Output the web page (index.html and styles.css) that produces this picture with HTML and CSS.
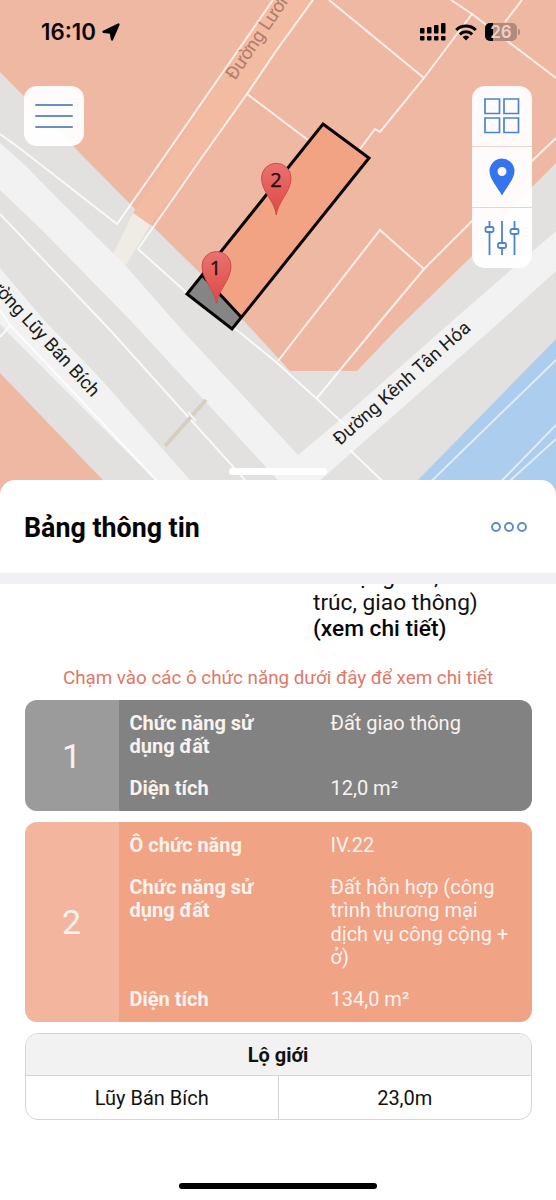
FILE: index.html
```html
<!DOCTYPE html>
<html lang="vi">
<head>
<meta charset="utf-8">
<title>Bảng thông tin</title>
<link rel="stylesheet" href="styles.css">
</head>
<body>
<div class="screen">
  <section class="map">
    <svg class="map-canvas" viewBox="0 0 556 500" width="556" height="500">
      <defs>
        <linearGradient id="pin" x1="0" y1="0" x2="0" y2="1"><stop offset="0" stop-color="#e97370"/><stop offset="1" stop-color="#df4742"/></linearGradient>
      </defs>
      <rect width="556" height="500" fill="#e2e1e0"/>
      <path class="zone" d="M0 0H556V163L532 187 471 257 396 330 357 371H290L200 273 133 207 0 72Z"/>
      <path class="zone" d="M0 373 122 500H0Z"/>
      <path fill="#f3bba2" d="M273 0H313L247 94 150 225 133 213Z"/>
      <path fill="#efebe5" d="M133 213 150 225 125 267 113 254Z"/>
      <path class="road" d="M0 143 25 165 60 201 113 253 125 265 182 330 298 455 340 420 442 330 520 262 556 231V271L502 320 350 454 298 500 296 500 265 466 130 320 42 230 0 190Z"/>
      <path class="road" d="M0 268 44 320 100 378 190 480 208 500H175L10 335 0 324Z"/>
      <path fill="#accded" d="M556 339 418 480 398 500H556Z"/>
      <g class="parcels">
        <path d="M273 0 162 160 117 224 22 150 0 134"/>
        <path d="M313 0 276 51 247 94 200 160 138 249 187 293 238 331 276 362 317 399 345 425M350 450 402 500"/>
        <path d="M247 94 308 140M329 0 424 78M451 0 472 14 556 78M522 0 505 22M472 14 424 78 380 132 375 129 360 149"/>
        <path d="M278 361 302 330 380 230 424 269M556 138 533 160 471 222 424 269 373 330 317 398"/>
        <path d="M0 214 110 330 262 499M0 310 10 325 175 500M0 337 10 326"/>
        <path class="water-line" d="M556 360 412 500M556 425 483 500M556 439 489 500"/>
      </g>
      <path d="M206 400 165 446" stroke="#d6cfc0" stroke-width="4"/>
      <path d="M188 412 196 421" stroke="#f5f4f2" stroke-width="2"/>
      <path d="M323 124 369 158 241 317 202 275Z" fill="#f1a384"/>
      <path d="M202 275 241 317 232 329 187 294Z" fill="#858585"/>
      <path d="M323 124 369 158 232 329 187 294ZM202 275 241 317" fill="none" stroke="#080404" stroke-width="3"/>
      <g fill="url(#pin)" stroke="#c84f4d">
        <path d="M276.250 215C275 201 261.500 192 261.500 178A14.750 14.750 0 0 1 291 178C291 192 278 201 276.250 215Z"/>
        <path d="M216.500 304C215 290 202 280 202 266A14.500 14.500 0 0 1 231 266C231 280 218 290 216.500 304Z"/>
      </g>
      <g class="pin-label">
        <text x="276" y="187">2</text>
        <text x="215.500" y="275">1</text>
      </g>
      <text class="street faded" transform="translate(235 81) rotate(-56)">Đường Lương Minh</text>
      <text class="street" transform="translate(340 446) rotate(-41.500)" textLength="176">Đường Kênh Tân Hóa</text>
      <text class="street" text-anchor="end" transform="translate(92 398) rotate(47.500)">Đường Lũy Bán Bích</text>
    </svg>

    <header class="status">
      <div class="status-left">
        <span class="clock">16:10</span>
        <svg width="18" height="18" viewBox="0 0 18 18"><path d="M16.500 1.500 10 16.500 8.800 9.700 1.500 8.800Z" stroke="#000" stroke-width="2.200" stroke-linejoin="round"/></svg>
      </div>
      <div class="status-right">
        <svg width="26" height="18" viewBox="0 0 26 18"><rect y="5" width="4.500" height="5.500" rx="1"/><rect x="7" y="4" width="4.500" height="6.500" rx="1"/><rect x="14" y="2" width="4.500" height="8.500" rx="1"/><rect x="21" width="4.500" height="10.500" rx="1"/><rect y="13" width="4.500" height="4.500" rx="1"/><rect x="7" y="13" width="4.500" height="4.500" rx="1"/><rect x="14" y="13" width="4.500" height="4.500" rx="1"/><rect x="21" y="13" width="4.500" height="4.500" rx="1"/></svg>
        <svg width="22" height="17" viewBox="0 0 22 17" fill="none" stroke="#000" stroke-width="3"><path d="M1.200 6A14 14 0 0 1 20.800 6M4.800 10.300A9 9 0 0 1 17.200 10.300"/><path d="M11 16.500 7.600 13A5 5 0 0 1 14.400 13Z" fill="#000" stroke="none"/></svg>
        <div class="battery"><span>26</span></div>
      </div>
    </header>

    <div class="tools">
      <div class="tool menu">
        <svg width="38" height="26" viewBox="0 0 38 26" fill="none" stroke="#6590c8" stroke-width="2" stroke-linecap="round"><path d="M1 2H37M1 13H37M1 24H37"/></svg>
      </div>
      <div class="tool-stack">
        <div class="tool"><svg width="36" height="36" viewBox="0 0 36 36" fill="none" stroke="#4a85cf" stroke-width="1.700"><path d="M1 1H15.500V15.500H1ZM20 1H34.500V15.500H20ZM1 20H15.500V34.500H1ZM20 20H34.500V34.500H20Z"/></svg></div>
        <div class="tool"><svg width="26" height="38" viewBox="0 0 26 38"><path fill="#3474ee" fill-rule="evenodd" d="M13 .5A12.500 12.500 0 0 0 .5 13C.5 21 9 30 13 37.500 17 30 25.500 21 25.500 13A12.500 12.500 0 0 0 13 .5ZM13 9A4.500 4.500 0 1 1 13 18 4.500 4.500 0 0 1 13 9Z"/></svg></div>
        <div class="tool"><svg width="36" height="34" viewBox="0 0 36 34" fill="none" stroke="#4a85cf" stroke-width="1.800"><path d="M5.500 0V6M5.500 11V34M18 0V22M18 27V34M30.500 0V8M30.500 13V34"/><rect x="1.500" y="6" width="8" height="5" rx="1.500"/><rect x="14" y="22" width="8" height="5" rx="1.500"/><rect x="26.500" y="8" width="8" height="5" rx="1.500"/></svg></div>
      </div>
    </div>
    <div class="handle"></div>
  </section>

  <main class="sheet">
    <div class="sheet-head">
      <h1>Bảng thông tin</h1>
      <svg width="37" height="12" viewBox="0 0 37 12" fill="none" stroke="#5b8cc9" stroke-width="1.900"><circle cx="5" cy="5" r="4"/><circle cx="18" cy="5" r="4"/><circle cx="31" cy="5" r="4"/></svg>
    </div>
    <div class="sheet-body">
      <p class="summary">sử dụng đất, kiến<br>trúc, giao thông)<br><b>(xem chi tiết)</b></p>
      <p class="hint">Chạm vào các ô chức năng dưới đây để xem chi tiết</p>
      <article class="card grey">
        <div class="index">1</div>
        <dl>
          <dt>Chức năng sử dụng đất</dt><dd>Đất giao thông</dd>
          <dt>Diện tích</dt><dd>12,0 m²</dd>
        </dl>
      </article>
      <article class="card orange">
        <div class="index">2</div>
        <dl>
          <dt>Ô chức năng</dt><dd>IV.22</dd>
          <dt>Chức năng sử dụng đất</dt><dd>Đất hỗn hợp (công<br>trình thương mại<br>dịch vụ công cộng +<br>ở)</dd>
          <dt>Diện tích</dt><dd>134,0 m²</dd>
        </dl>
      </article>
      <div class="limits">
        <div class="limits-title">Lộ giới</div>
        <div class="limits-row"><span>Lũy Bán Bích</span><span>23,0m</span></div>
      </div>
    </div>
    <div class="home-bar"></div>
  </main>
</div>
</body>
</html>
```
FILE: styles.css
```css
* { box-sizing: border-box; }
body { margin: 0; font-family: Roboto, "Liberation Sans", sans-serif; color: #111; background: #fff; }
h1, p, dl, dd { margin: 0; }
svg { display: block; flex: none; }
.screen { width: 556px; height: 1200px; overflow: hidden; display: flex; flex-direction: column; }

.map { position: relative; height: 480px; flex: none; display: flex; flex-direction: column; }
.map-canvas { position: absolute; top: 0; left: 0; }
.zone { fill: #efb8a3; }
.road { fill: #f2f2f2; }
.parcels { fill: none; stroke: #fff; stroke-opacity: .78; stroke-width: 2; }
.water-line { stroke-opacity: .6; }
.pin-label { font: 20px "Open Sans", sans-serif; fill: #2a1110; stroke: #2a1110; stroke-width: .4px; text-anchor: middle; }
.street { font-size: 18.5px; fill: #1c1c1c; }
.faded { fill: #b07c6c; }

.status { position: relative; height: 86px; padding: 22px 36px 0 41px; display: flex; justify-content: space-between; align-items: flex-start; }
.status-left { display: flex; align-items: center; gap: 6px; height: 20px; }
.clock { font: 600 22.3px/20px Inter, sans-serif; color: #0b0504; }
.status-right { display: flex; align-items: center; gap: 8.5px; height: 20px; }
.battery { position: relative; width: 32px; height: 18px; border-radius: 5px; background: linear-gradient(90deg, #000 26%, #b08a7c 26%); text-align: center; font: 600 17px/18px Inter, sans-serif; color: #f0cfc2; margin-right: 3px; }
.battery::after { content: ""; position: absolute; right: -3px; top: 6px; width: 2px; height: 6px; border-radius: 0 2px 2px 0; background: #b08a7c; }

.tools { position: relative; padding: 0 24px; display: flex; justify-content: space-between; align-items: flex-start; }
.tool { width: 60px; height: 60px; display: flex; align-items: center; justify-content: center; }
.menu, .tool-stack { background: rgba(255, 255, 255, .94); border-radius: 13px; }
.tool-stack { height: 182px; }
.tool-stack .tool + .tool { height: 61px; border-top: 1px solid #e9d3ca; }
.handle { position: relative; width: 98px; height: 7px; border-radius: 4px; background: #fff; margin: auto auto 5px; }

.sheet { position: relative; flex: 1; background: #fff; border-radius: 15px 15px 0 0; display: flex; flex-direction: column; }
.sheet-head { height: 104px; flex: none; border-bottom: 11px solid #f0f0f5; padding: 2px 28px 0 24px; display: flex; align-items: center; justify-content: space-between; }
h1 { font-size: 26.8px; font-weight: 700; line-height: 30px; color: #050505; }
.sheet-body { overflow: hidden; padding: 0 24.500px; flex: 1; }
.summary { margin: -20.5px 0 0 288.500px; font-size: 22.7px; line-height: 26.2px; white-space: nowrap; }
.summary b { font-weight: 500; color: #050505; }
.hint { margin-top: 24.4px; height: 33.5px; text-align: center; font-size: 18.8px; line-height: 23px; color: #dd7967; white-space: nowrap; }
.card { display: flex; border-radius: 12px; overflow: hidden; color: #f9f2ee; margin-bottom: 11px; }
.card .index { width: 94px; flex: none; display: flex; align-items: center; justify-content: center; font-size: 34px; background: rgba(255, 255, 255, .2); }
.grey { background: #828282; height: 111px; }
.orange { background: #f0a385; height: 200px; }
dl { flex: 1; display: grid; grid-template-columns: 201px 1fr; align-content: start; row-gap: 18.700px; padding: 11.500px 0 0 11px; font-size: 20px; line-height: 23.500px; }
dt { font-weight: 700; width: 140px; }
dd { white-space: nowrap; }
.limits { height: 87px; border: 1.500px solid #d5d5d5; border-radius: 13px; overflow: hidden; text-align: center; font-size: 20px; }
.limits-title { height: 42px; line-height: 42px; font-weight: 700; background: #f2f2f2; border-bottom: 1px solid #d5d5d5; }
.limits-row { display: grid; grid-template-columns: 1fr 1fr; line-height: 44px; }
.limits-row span + span { border-left: 1px solid #d5d5d5; }
.home-bar { width: 198px; height: 6px; border-radius: 3px; background: #000; margin: 0 auto 11px; flex: none; }
```
